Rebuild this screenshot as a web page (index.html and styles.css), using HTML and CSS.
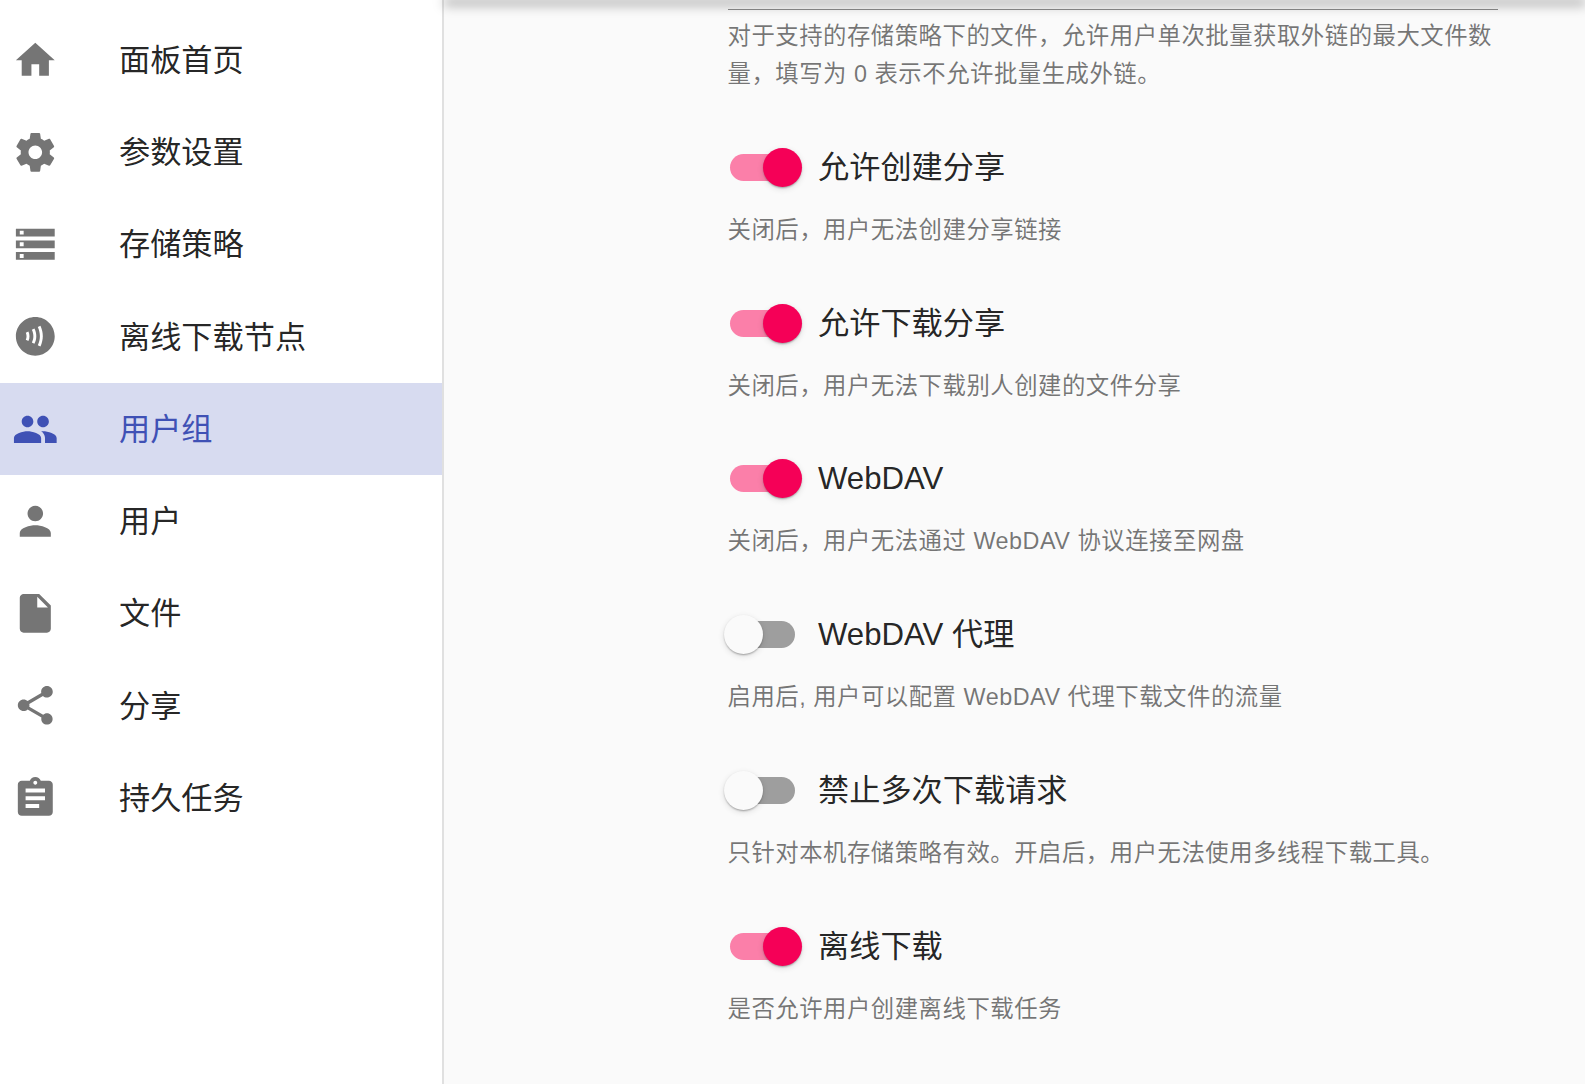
FILE: index.html
```html
<!DOCTYPE html>
<html lang="zh-CN">
<head>
<meta charset="utf-8">
<title>用户组</title>
<link rel="stylesheet" href="styles.css">
</head>
<body>
<div class="app">
  <div class="appbar"></div>
  <nav class="sidebar">
    <a class="nav-item"><svg class="nav-icon" viewBox="0 0 24 24"><path d="M10 20v-6h4v6h5v-8h3L12 3 2 12h3v8z"/></svg><span>面板首页</span></a>
    <a class="nav-item"><svg class="nav-icon" viewBox="0 0 24 24"><path d="M19.43 12.98c.04-.32.07-.64.07-.98s-.03-.66-.07-.98l2.11-1.65c.19-.15.24-.42.12-.64l-2-3.46c-.12-.22-.39-.3-.61-.22l-2.49 1c-.52-.4-1.08-.73-1.69-.98l-.38-2.65C14.46 2.18 14.25 2 14 2h-4c-.25 0-.46.18-.49.42l-.38 2.65c-.61.25-1.17.59-1.69.98l-2.49-1c-.23-.09-.49 0-.61.22l-2 3.46c-.13.22-.07.49.12.64l2.11 1.65c-.04.32-.07.65-.07.98s.03.66.07.98l-2.11 1.65c-.19.15-.24.42-.12.64l2 3.46c.12.22.39.3.61.22l2.49-1c.52.4 1.08.73 1.69.98l.38 2.65c.03.24.24.42.49.42h4c.25 0 .46-.18.49-.42l.38-2.65c.61-.25 1.17-.59 1.69-.98l2.49 1c.23.09.49 0 .61-.22l2-3.46c.12-.22.07-.49-.12-.64l-2.11-1.65zM12 15.5c-1.93 0-3.5-1.57-3.5-3.5s1.57-3.5 3.5-3.5 3.5 1.57 3.5 3.5-1.57 3.5-3.5 3.5z"/></svg><span>参数设置</span></a>
    <a class="nav-item"><svg class="nav-icon" viewBox="0 0 24 24"><path d="M2 20h20v-4H2v4zm2-3h2v2H4v-2zM2 4v4h20V4H2zm4 3H4V5h2v2zm-4 7h20v-4H2v4zm2-3h2v2H4v-2z"/></svg><span>存储策略</span></a>
    <a class="nav-item"><svg class="nav-icon" viewBox="0 0 24 24"><path d="M12 2C6.48 2 2 6.48 2 12s4.48 10 10 10 10-4.48 10-10S17.52 2 12 2zM8.46 14.45l-1.36-.62c.28-.61.41-1.24.4-1.86-.01-.63-.14-1.24-.4-1.8l1.36-.63c.35.75.53 1.56.54 2.4.01.86-.17 1.7-.54 2.51zm3.07 1.43l-1.3-.74c.52-.92.78-1.98.78-3.14 0-1.2-.27-2.33-.8-3.37l1.34-.68c.64 1.26.96 2.62.96 4.05 0 1.41-.33 2.72-.98 3.88zm3.14 1.39l-1.38-.6c.72-1.64 1.08-3.23 1.08-4.73 0-1.51-.36-3.11-1.08-4.75l1.38-.6c.8 1.83 1.2 3.62 1.2 5.35-.01 1.74-.41 3.51-1.2 5.33z"/></svg><span>离线下载节点</span></a>
    <a class="nav-item nav-item-active"><svg class="nav-icon" viewBox="0 0 24 24"><path d="M16 11c1.66 0 2.99-1.34 2.99-3S17.66 5 16 5c-1.66 0-3 1.34-3 3s1.34 3 3 3zm-8 0c1.66 0 2.99-1.34 2.99-3S9.66 5 8 5C6.34 5 5 6.34 5 8s1.34 3 3 3zm0 2c-2.33 0-7 1.17-7 3.5V19h14v-2.5c0-2.33-4.67-3.5-7-3.5zm8 0c-.29 0-.62.02-.97.05 1.16.84 1.97 1.97 1.97 3.45V19h6v-2.5c0-2.33-4.67-3.5-7-3.5z"/></svg><span>用户组</span></a>
    <a class="nav-item"><svg class="nav-icon" viewBox="0 0 24 24"><path d="M12 12c2.21 0 4-1.79 4-4s-1.79-4-4-4-4 1.79-4 4 1.79 4 4 4zm0 2c-2.67 0-8 1.34-8 4v2h16v-2c0-2.66-5.33-4-8-4z"/></svg><span>用户</span></a>
    <a class="nav-item"><svg class="nav-icon" viewBox="0 0 24 24"><path d="M6 2c-1.1 0-1.99.9-1.99 2L4 20c0 1.1.89 2 1.99 2H18c1.1 0 2-.9 2-2V8l-6-6H6zm7 7V3.5L18.5 9H13z"/></svg><span>文件</span></a>
    <a class="nav-item"><svg class="nav-icon" viewBox="0 0 24 24"><path d="M18 16.08c-.76 0-1.44.3-1.96.77L8.91 12.7c.05-.23.09-.46.09-.7s-.04-.47-.09-.7l7.05-4.11c.54.5 1.25.81 2.04.81 1.66 0 3-1.34 3-3s-1.34-3-3-3-3 1.34-3 3c0 .24.04.47.09.7L8.04 9.81C7.5 9.31 6.79 9 6 9c-1.66 0-3 1.34-3 3s1.34 3 3 3c.79 0 1.5-.31 2.04-.81l7.12 4.16c-.05.21-.08.43-.08.65 0 1.61 1.31 2.92 2.92 2.92 1.61 0 2.92-1.31 2.92-2.92s-1.31-2.92-2.92-2.92z"/></svg><span>分享</span></a>
    <a class="nav-item"><svg class="nav-icon" viewBox="0 0 24 24"><path d="M19 3h-4.18C14.4 1.84 13.3 1 12 1c-1.3 0-2.4.84-2.82 2H5c-1.1 0-2 .9-2 2v14c0 1.1.9 2 2 2h14c1.1 0 2-.9 2-2V5c0-1.1-.9-2-2-2zm-7 0c.55 0 1 .45 1 1s-.45 1-1 1-1-.45-1-1 .45-1 1-1zm2 14H7v-2h7v2zm3-4H7v-2h10v2zm0-4H7V7h10v2z"/></svg><span>持久任务</span></a>
  </nav>
  <main class="main">
    <div class="column">
      <hr class="rule">
      <p class="hint hint-first">对于支持的存储策略下的文件，允许用户单次批量获取外链的最大文件数量，填写为 0 表示不允许批量生成外链。</p>

      <section class="setting">
        <label class="setting-label"><span class="switch switch-on"><span class="track"></span><span class="thumb"></span></span><span class="title">允许创建分享</span></label>
        <p class="hint">关闭后，用户无法创建分享链接</p>
      </section>
      <section class="setting">
        <label class="setting-label"><span class="switch switch-on"><span class="track"></span><span class="thumb"></span></span><span class="title">允许下载分享</span></label>
        <p class="hint">关闭后，用户无法下载别人创建的文件分享</p>
      </section>
      <section class="setting">
        <label class="setting-label"><span class="switch switch-on"><span class="track"></span><span class="thumb"></span></span><span class="title">WebDAV</span></label>
        <p class="hint">关闭后，用户无法通过 WebDAV 协议连接至网盘</p>
      </section>
      <section class="setting">
        <label class="setting-label"><span class="switch"><span class="track"></span><span class="thumb"></span></span><span class="title">WebDAV 代理</span></label>
        <p class="hint">启用后, 用户可以配置 WebDAV 代理下载文件的流量</p>
      </section>
      <section class="setting">
        <label class="setting-label"><span class="switch"><span class="track"></span><span class="thumb"></span></span><span class="title">禁止多次下载请求</span></label>
        <p class="hint">只针对本机存储策略有效。开启后，用户无法使用多线程下载工具。</p>
      </section>
      <section class="setting">
        <label class="setting-label"><span class="switch switch-on"><span class="track"></span><span class="thumb"></span></span><span class="title">离线下载</span></label>
        <p class="hint">是否允许用户创建离线下载任务</p>
      </section>
    </div>
  </main>
</div>
</body>
</html>
```
FILE: styles.css
```css
* { box-sizing: border-box; }

html, body {
  margin: 0;
  height: 100%;
  overflow: hidden;
}

body {
  font-family: "Liberation Sans", "Noto Sans CJK SC", sans-serif;
  background: #fafafa;
  color: rgba(0, 0, 0, 0.87);
}

.app {
  position: relative;
  display: flex;
  height: 1084px;
  overflow: hidden;
}

.appbar {
  position: absolute;
  top: -4px;
  left: 445px;
  right: 0;
  height: 4px;
  box-shadow: 0 4px 12px 1px rgba(0, 0, 0, 0.38);
}

.sidebar {
  flex: 0 0 444px;
  padding-top: 13.75px;
  background: #fff;
  border-right: 2px solid #e0e0e0;
}

.nav-item {
  display: flex;
  align-items: center;
  height: 92.25px;
  padding-left: 12px;
  font-size: 31.2px;
  line-height: 46px;
}

.nav-item span { margin-left: 60.4px; position: relative; top: 1px; }

.nav-icon {
  flex: 0 0 46.6px;
  width: 46.6px;
  height: 46.6px;
  fill: #757575;
}

.nav-item-active {
  background: #d7dbf0;
  color: #3f51b5;
}

.nav-item-active .nav-icon { fill: #3f51b5; }

.main {
  flex: 1;
  min-width: 0;
}

.column {
  width: 770px;
  margin-left: 284px;
  padding-top: 9px;
}

.rule {
  margin: 0;
  border: 0;
  border-top: 1px solid #8c8c8c;
}

.hint {
  margin: 0 0 0 -0.5px;
  font-size: 23.4px;
  line-height: 38px;
  letter-spacing: 0.5px;
  color: rgba(0, 0, 0, 0.54);
}

.hint-first { padding-top: 7px; }

.setting {
  margin-top: 46.8px;
  height: 109px;
}

.hint-first + .setting { margin-top: 54.9px; }

.setting-label {
  display: flex;
  align-items: center;
  height: 39px;
  margin-left: -4px;
  margin-bottom: 24px;
}

.title {
  margin-left: 16px;
  font-size: 31.2px;
  line-height: 39px;
  color: rgba(0, 0, 0, 0.87);
}

.switch {
  position: relative;
  flex: 0 0 78px;
  width: 78px;
  height: 39px;
}

.track {
  position: absolute;
  left: 6px;
  top: 6px;
  width: 65px;
  height: 27px;
  border-radius: 14px;
  background: #9e9e9e;
}

.thumb {
  position: absolute;
  left: 0;
  top: 0;
  width: 39px;
  height: 39px;
  border-radius: 50%;
  background: #fafafa;
  box-shadow: 0 2px 2px -1px rgba(0, 0, 0, 0.2), 0 1px 2px 0 rgba(0, 0, 0, 0.14), 0 2px 6px 0 rgba(0, 0, 0, 0.12);
}

.switch-on .track { background: #fb7fa9; }

.switch-on .thumb {
  left: 38.5px;
  background: #f50057;
}
```
